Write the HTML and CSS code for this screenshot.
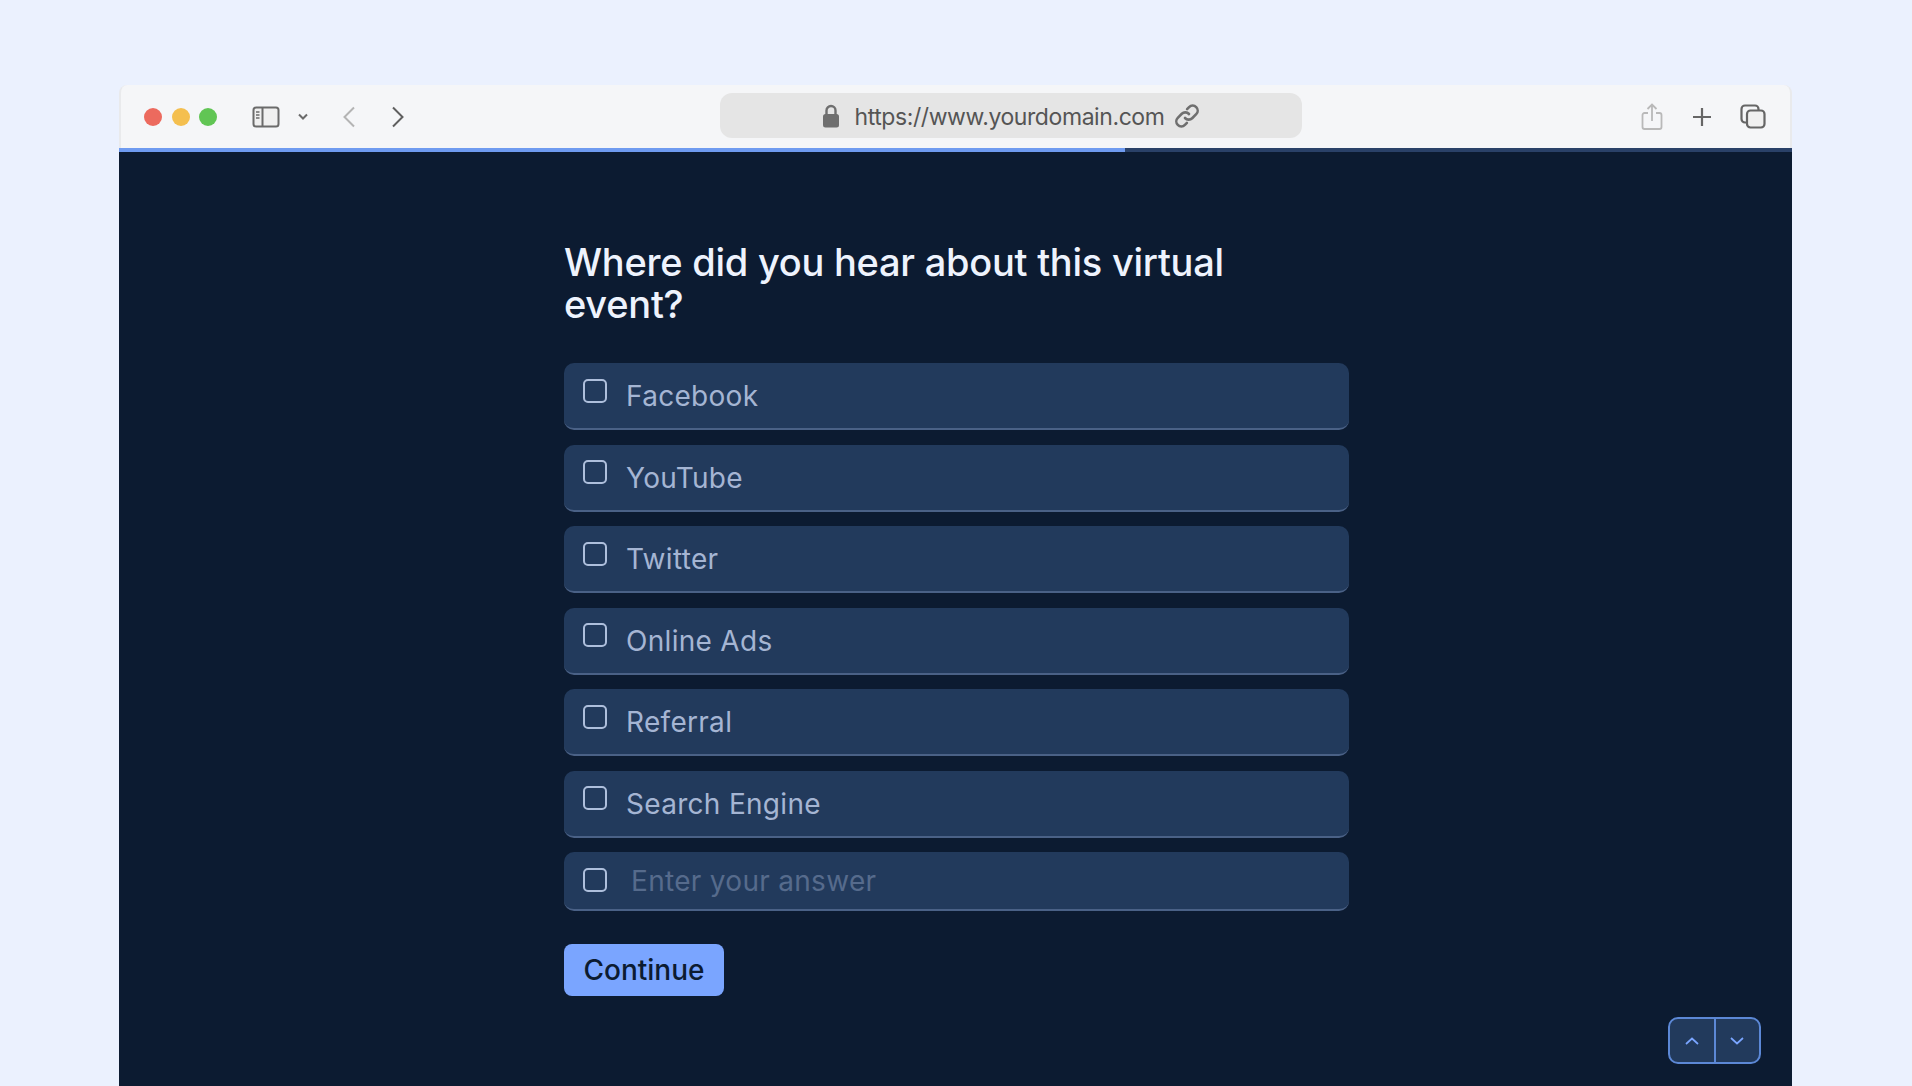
FILE: index.html
```html
<!DOCTYPE html>
<html lang="en">
<head>
  <meta charset="UTF-8" />
  <meta name="viewport" content="width=device-width, initial-scale=1.0" />
  <title>Where did you hear about this virtual event?</title>
  <link rel="stylesheet" href="styles.css">
</head>
<body>
  <div class="window">
    <header class="toolbar">
      <div class="lights">
        <span class="light red"></span>
        <span class="light yellow"></span>
        <span class="light green"></span>
      </div>
      <svg class="icon-sidebar" width="28" height="22" viewBox="0 0 28 22" fill="none" stroke="#6b6b6b" stroke-width="2">
        <rect x="1.500" y="1.500" width="25" height="19" rx="2.500" fill="#f0f0f0"/>
        <path d="M10.500 1.500v19"/>
        <path d="M4 6h3.500M4 9h3.500M4 12h3.500" stroke-width="1.500"/>
      </svg>
      <svg class="icon-caret" width="12" height="8" viewBox="0 0 12 8" fill="none" stroke="#6b6b6b" stroke-width="2">
        <path d="M2 1.500l4 4 4-4"/>
      </svg>
      <svg class="icon-back" width="14" height="22" viewBox="0 0 14 22" fill="none" stroke="#b4b4b4" stroke-width="2">
        <path d="M12 1.500L2.500 11l9.500 9.500"/>
      </svg>
      <svg class="icon-forward" width="14" height="22" viewBox="0 0 14 22" fill="none" stroke="#5f5f5f" stroke-width="2">
        <path d="M2 1.500l9.500 9.500L2 20.500"/>
      </svg>
      <div class="address">
        <svg width="18" height="24" viewBox="0 0 18 24" fill="none">
          <path d="M4.500 11V6.500a4.500 4.500 0 0 1 9 0V11" stroke="#6f6f6f" stroke-width="2.400"/>
          <rect x="1" y="10" width="16" height="13.500" rx="2.500" fill="#6f6f6f"/>
        </svg>
        <span class="url">https://www.yourdomain.com</span>
        <svg width="26" height="26" viewBox="0 0 26 26" fill="none" stroke="#6f6f6f" stroke-width="2.600" stroke-linecap="round">
          <path d="M11 15a5 5 0 0 0 7.200.2l4-4a5 5 0 0 0-7.100-7.100l-2 2"/>
          <path d="M15 11a5 5 0 0 0-7.200-.2l-4 4a5 5 0 0 0 7.100 7.100l2-2"/>
        </svg>
      </div>
      <div class="actions">
        <svg width="22" height="28" viewBox="0 0 22 28" fill="none" stroke="#b9b9b9" stroke-width="1.800">
          <path d="M7 10H3.500A2 2 0 0 0 1.500 12v12a2 2 0 0 0 2 2h15a2 2 0 0 0 2-2V12a2 2 0 0 0-2-2H15"/>
          <path d="M11 18V2M6.500 6L11 1.500 15.500 6"/>
        </svg>
        <svg width="20" height="20" viewBox="0 0 20 20" fill="none" stroke="#666" stroke-width="2.200">
          <path d="M10 1v18M1 10h18"/>
        </svg>
        <svg width="26" height="25" viewBox="0 0 26 25" fill="none" stroke="#666" stroke-width="2.200">
          <rect x="1.500" y="1.500" width="17" height="17" rx="3.500"/>
          <rect x="7" y="6.500" width="17.500" height="17" rx="3.500" fill="#f0f0f0"/>
        </svg>
      </div>
    </header>
    <div class="progress"><div class="progress-fill"></div></div>

    <main class="content">
      <form class="survey">
        <h1>Where did you hear about this virtual event?</h1>
        <div class="options">
          <label class="option"><span class="box"></span>Facebook</label>
          <label class="option"><span class="box"></span>YouTube</label>
          <label class="option"><span class="box"></span>Twitter</label>
          <label class="option"><span class="box"></span>Online Ads</label>
          <label class="option"><span class="box"></span>Referral</label>
          <label class="option"><span class="box"></span>Search Engine</label>
          <label class="option other"><span class="box"></span><input type="text" placeholder="Enter your answer" /></label>
        </div>
        <button type="button" class="continue">Continue</button>
      </form>
      <div class="pager">
        <button type="button">
          <svg width="14" height="8" viewBox="0 0 14 8" fill="none" stroke="#7aa5ff" stroke-width="1.700"><path d="M1 7l6-5.500L13 7"/></svg>
        </button>
        <button type="button">
          <svg width="14" height="8" viewBox="0 0 14 8" fill="none" stroke="#7aa5ff" stroke-width="1.700"><path d="M1 1l6 5.500L13 1"/></svg>
        </button>
      </div>
    </main>
  </div>
</body>
</html>
```

FILE: styles.css
```css
* {
  box-sizing: border-box;
}
html, body {
  height: 100%;
}
body {
  margin: 0;
  padding: 85px 120px 0 119px;
  overflow: hidden;
  background-color: #ebf1fe;
  font-family: Inter, "Noto Sans", sans-serif;
}
.window {
  display: flex;
  flex-direction: column;
  height: 100%;
}
.toolbar {
  display: flex;
  align-items: center;
  height: 63px;
  padding-left: 23px;
  background-color: #f5f6f8;
  border-left: 2px solid #e9eaec;
  border-right: 2px solid #e9eaec;
  border-radius: 8px 8px 0 0;
}
.lights {
  display: flex;
  gap: 9.500px;
}
.light {
  width: 18px;
  height: 18px;
  border-radius: 50%;
}
.red { background: #ec6a5e; }
.yellow { background: #f4bf4f; }
.green { background: #61c554; }
.icon-sidebar { margin-left: 35px; }
.icon-caret { margin-left: 17px; }
.icon-back { margin-left: 33px; }
.icon-forward { margin-left: 35px; }
.address {
  display: flex;
  align-items: center;
  justify-content: center;
  gap: 12px;
  width: 582px;
  height: 45px;
  margin-left: 315px;
  margin-top: -2px;
  background-color: #e5e5e5;
  border-radius: 12px;
}
.url {
  margin: 0 -2.500px 0 2.500px;
  padding-top: 3px;
  color: #555;
  font-size: 23px;
  letter-spacing: -0.420px;
}
.actions {
  display: flex;
  align-items: center;
  gap: 28.500px;
  margin-left: 339px;
}
.progress {
  height: 4px;
  background-color: #2a4168;
}
.progress-fill {
  width: 1006px;
  height: 100%;
  background-color: #6f9bf0;
}
.content {
  position: relative;
  flex: 1;
  padding: 89px 0 0 445px;
  background-color: #0c1b31;
}
.survey {
  width: 785px;
}
h1 {
  max-width: 760px;
  margin: 0 0 38px;
  color: #eef3fd;
  font-size: 38px;
  font-weight: 500;
  line-height: 42px;
  letter-spacing: -0.250px;
}
.options {
  display: flex;
  flex-direction: column;
  gap: 14.500px;
}
.option {
  display: flex;
  align-items: center;
  height: 67px;
  padding: 1px 0 0 19px;
  color: #a5b5d3;
  font-size: 28px;
  letter-spacing: 0.300px;
  background-color: #223a5c;
  border-bottom: 2px solid #4a6186;
  border-radius: 10px;
}
.box {
  flex: none;
  width: 24px;
  height: 24px;
  margin-top: -11px;
  margin-right: 19px;
  border: 2px solid #aebfdc;
  border-radius: 5px;
}
.other {
  height: 59px;
  padding-top: 0;
}
.other .box {
  margin-top: -2px;
  margin-right: 24px;
}
.other input {
  flex: 1;
  min-width: 0;
  padding: 0;
  color: #a5b5d3;
  font: inherit;
  letter-spacing: inherit;
  background: transparent;
  border: none;
  outline: none;
}
.other input::placeholder {
  color: #566b8c;
  opacity: 1;
}
.continue {
  display: block;
  width: 160px;
  height: 52px;
  margin-top: 33px;
  padding: 0;
  color: #0c1b31;
  font-family: inherit;
  font-size: 28px;
  font-weight: 500;
  background-color: #7aa5ff;
  border: none;
  border-radius: 8px;
}
.pager {
  position: absolute;
  right: 31px;
  bottom: 22px;
  display: flex;
  width: 93px;
  height: 47px;
  overflow: hidden;
  background-color: #223a5c;
  border: 2px solid #5c88d6;
  border-radius: 10px;
}
.pager button {
  display: flex;
  flex: 1;
  align-items: center;
  justify-content: center;
  padding: 0;
  background: transparent;
  border: none;
}
.pager button + button {
  border-left: 2px solid #5c88d6;
}
```
